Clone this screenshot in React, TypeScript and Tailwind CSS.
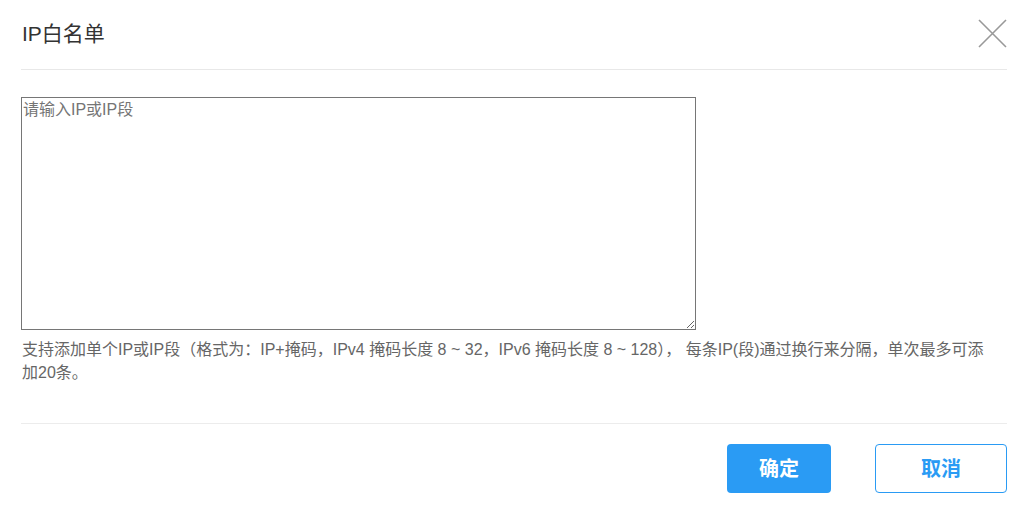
import React from 'react';

const font = { fontFamily: '"Liberation Sans", "Noto Sans CJK SC", sans-serif' };

export default function App() {
  return (
    <div className="w-[1031px] h-[513px] bg-white" style={font}>
      <div className="pl-[21px] pr-[24px]">
        <div className="flex items-center justify-between pt-[19px] pb-[21px] border-b border-[#e8e8e8]">
          <h1 className="text-[21px] leading-[29px] text-[#333] pl-[1px]">IP白名单</h1>
          <button className="w-[29px] h-[29px] text-[#999]">
            <svg viewBox="0 0 29 29" className="w-[29px] h-[29px]">
              <path d="M1 1 L28 28 M28 1 L1 28" stroke="currentColor" strokeWidth="1.6" fill="none" />
            </svg>
          </button>
        </div>
        <div className="pt-[27px]">
          <textarea
            placeholder="请输入IP或IP段"
            className="block w-[675px] h-[233px] border border-[#767676] px-[1px] py-[1px] text-[16px] leading-[22px] text-[#333] placeholder:text-[#757575] outline-none resize"
          />
          <p className="mt-[8px] max-w-[972px] text-[16px] leading-[23px] text-[#666] pl-[1px]">
            支持添加单个IP或IP段（格式为：IP+掩码，IPv4 掩码长度 8 ~ 32，IPv6 掩码长度 8 ~ 128）， 每条IP(段)通过换行来分隔，单次最多可添加20条。
          </p>
        </div>
        <div className="mt-[39px] border-t border-[#ececec] pt-[20px] flex justify-end gap-[44px]">
          <button className="w-[104px] h-[49px] rounded-[4px] bg-[#2a9bf4] text-white text-[20px] font-bold">确定</button>
          <button className="w-[132px] h-[49px] rounded-[4px] border border-[#2a9bf4] bg-white text-[#2a9bf4] text-[20px] font-bold">取消</button>
        </div>
      </div>
    </div>
  );
}
